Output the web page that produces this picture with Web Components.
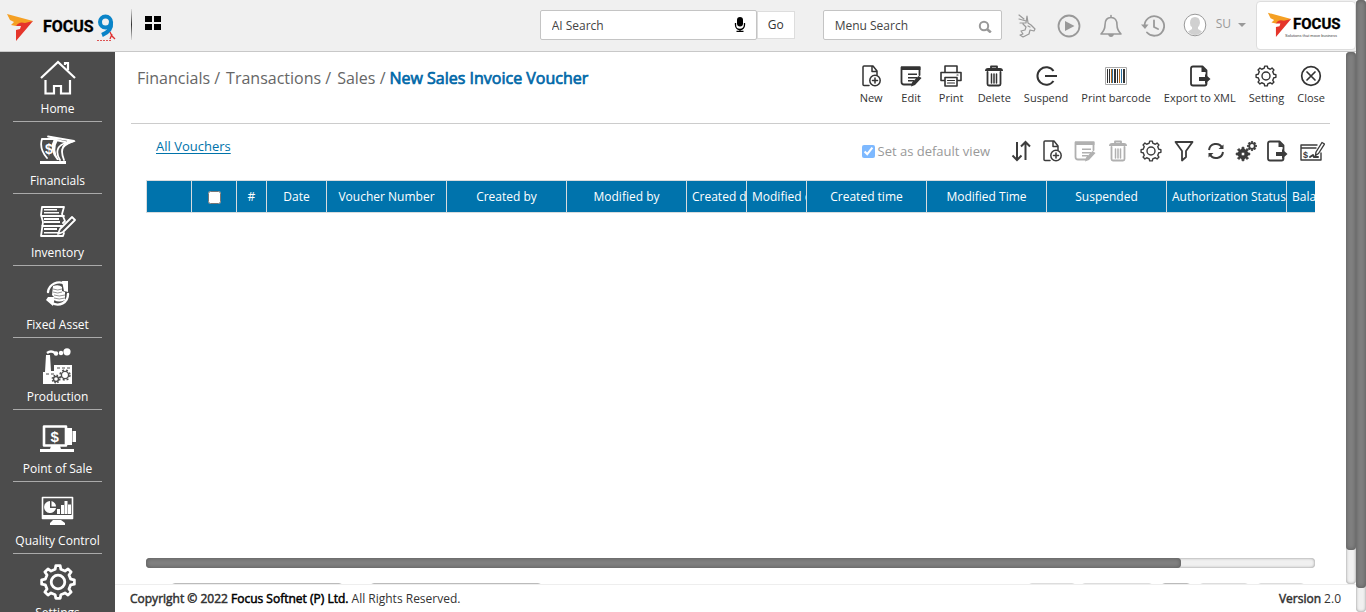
<!DOCTYPE html>
<html lang="en">
<head>
<meta charset="utf-8">
<title>New Sales Invoice Voucher</title>
<style>
html, body { height: 100%; margin: 0; }
body { font: 13px/20px "Open Sans", "Noto Sans", sans-serif; color: #333; background: #fff; overflow: hidden; }
</style>
</head>
<body>
<focus-app></focus-app>

<template id="t-app">
<style>
:host { display: flex; height: 100vh; }
.shell { flex: 1; min-width: 0; display: flex; flex-direction: column; }
.body { flex: 1; min-height: 0; display: flex; }
.work { flex: 1; min-width: 0; display: flex; flex-direction: column; }
.pane { flex: 1; min-height: 0; display: flex; }
voucher-page { flex: 1; min-width: 0; }
footer { display: flex; justify-content: space-between; padding: 4px 15px 3px; border-top: 1px solid #eee; font-size: 12px; line-height: 20px; color: #333; }
b { font-weight: 400; -webkit-text-stroke: .5px currentColor; }
.co { color: #000; }
</style>
<div class="shell">
  <app-header></app-header>
  <div class="body">
    <side-nav>
      <nav-item icon="home">Home</nav-item>
      <nav-item icon="financials">Financials</nav-item>
      <nav-item icon="inventory">Inventory</nav-item>
      <nav-item icon="asset">Fixed Asset</nav-item>
      <nav-item icon="production">Production</nav-item>
      <nav-item icon="pos">Point of Sale</nav-item>
      <nav-item icon="quality">Quality Control</nav-item>
      <nav-item icon="biggear">Settings</nav-item>
    </side-nav>
    <div class="work">
      <div class="pane">
        <voucher-page></voucher-page>
        <scroll-bar style="--thumb: 93.6%"></scroll-bar>
      </div>
      <footer>
        <span><b>Copyright © 2022 <span class="co">Focus Softnet (P) Ltd.</span></b> All Rights Reserved.</span>
        <span><b>Version</b> 2.0</span>
      </footer>
    </div>
  </div>
</div>
<scroll-bar style="--thumb: 96%"></scroll-bar>
</template>

<template id="t-header">
<style>
:host { display: flex; align-items: flex-start; height: 51px; background: #f0f0f0; border-bottom: 1px solid #c8c8c8; }
.logo { margin: 10px 0 0 6px; }
.rule { width: 1px; height: 31px; margin: 9px 12px 0 14px; background: linear-gradient(#ddd, #333 50%, #ddd); }
button { font: inherit; color: inherit; border: 0; background: none; padding: 0; margin: 0; cursor: pointer; display: block; }
.apps { margin-top: 14px; }
.search { display: flex; align-items: center; box-sizing: border-box; height: 30px; margin-top: 10px; background: #fff; border: 1px solid #c4c4c4; border-radius: 2px; padding: 0 8px 0 11px; }
.ai { width: 217px; margin-left: auto; }
.menu { width: 179px; margin-left: 28px; }
input { flex: 1; min-width: 0; border: 0; outline: 0; padding: 2px 0 0; background: none; font: inherit; font-size: 12px; color: #444; }
input::placeholder { color: #444; opacity: 1; }
.go { box-sizing: border-box; width: 38px; height: 28px; margin-top: 11px; background: #fff; border: 1px solid #ddd; font-size: 12px; color: #333; }
.icons { display: flex; gap: 18px; margin: 14px 0 0 13px; color: #999; }
.user { display: flex; align-items: center; margin: 13px 0 0 18px; color: #999; font-size: 12px; }
.user span { margin: 0 6px 2px 9px; }
.brand { box-sizing: border-box; width: 100px; height: 49px; margin: 1px 0 0 9px; padding: 7px 0 0 10px; background: #fff; border: 1px solid #ddd; border-radius: 4px; }
</style>
<focus-logo class="logo" kind="nine"></focus-logo>
<div class="rule"></div>
<button class="apps" aria-label="Apps"><fs-icon name="apps" size="18"></fs-icon></button>
<label class="search ai"><input type="text" placeholder="AI Search" aria-label="AI Search"><fs-icon name="mic" size="16"></fs-icon></label>
<button class="go">Go</button>
<label class="search menu"><input type="text" placeholder="Menu Search" aria-label="Menu Search"><fs-icon name="search" size="16" style="color:#999"></fs-icon></label>
<div class="icons">
  <button aria-label="Guide"><fs-icon name="guide" size="24"></fs-icon></button>
  <button aria-label="Play"><fs-icon name="play" size="24"></fs-icon></button>
  <button aria-label="Alerts"><fs-icon name="bell" size="24"></fs-icon></button>
  <button aria-label="History"><fs-icon name="history" size="24"></fs-icon></button>
</div>
<button class="user" aria-label="User menu"><fs-icon name="avatar" size="24"></fs-icon><span>SU</span><fs-icon name="caret" size="10"></fs-icon></button>
<div class="brand"><focus-logo></focus-logo></div>
</template>

<template id="t-page">
<style>
:host { display: flex; flex-direction: column; box-sizing: border-box; padding: 0 16px; overflow: hidden; }
.top { display: flex; justify-content: space-between; align-items: flex-start; height: 71px; border-bottom: 1px solid #ccc; }
nav { display: flex; margin: 14px 0 0 6px; font-size: 16px; line-height: 24px; color: #666; white-space: nowrap; }
nav a { color: inherit; text-decoration: none; }
nav a + a { margin-left: 6px; }
nav b { margin-left: 4px; color: #0068a8; font-weight: 400; -webkit-text-stroke: .7px currentColor; }
.tools { display: flex; gap: 13px; margin: 13px 5px 0 0; }
.view { display: flex; align-items: center; height: 56px; padding: 0 3px 0 25px; }
.all { margin: 0 auto 12px 0; color: #0073aa; text-decoration: underline; text-underline-offset: 2px; }
.def { display: flex; align-items: center; gap: 3px; margin: 0 19px 2px 0; color: #999; }
.def input { width: 13px; height: 13px; margin: 0; opacity: .5; }
.acts { display: flex; gap: 7px; color: #3c3c3c; align-items: center; margin-bottom: 2px; }
.acts button { border: 0; background: none; padding: 0; color: inherit; width: 26px; display: flex; justify-content: center; }
.acts .narrow { width: 23px; }
.acts .wide { width: 30px; }
.acts [disabled] { color: #b0b0b0; }
voucher-grid { flex: 1; min-height: 0; margin: 0 15px; }
.hbar { margin: 0 15px; }
.pager { display: flex; margin: 15px 25px -29px 40px; gap: 5px; }
.pager select, .pager button { box-sizing: border-box; height: 30px; border: 1px solid #bbb; border-radius: 4px; background: #fff; }
.pager select { width: 172px; margin-right: 22px; }
.pager button { border-color: #ddd; width: 48px; }
.pager .first { margin-left: auto; }
.pager .prev { width: 72px; margin-right: 3px; }
.pager .cur { width: 30px; border-color: #bbb; margin-right: 3px; }
.pager .next { width: 50px; margin-right: 3px; }
</style>
<div class="top">
  <nav><a href="#">Financials /</a> <a href="#">Transactions /</a> <a href="#">Sales /</a><b>New Sales Invoice Voucher</b></nav>
  <div class="tools">
    <tool-button icon="new">New</tool-button>
    <tool-button icon="edit">Edit</tool-button>
    <tool-button icon="print">Print</tool-button>
    <tool-button icon="trash">Delete</tool-button>
    <tool-button icon="suspend">Suspend</tool-button>
    <tool-button icon="barcode">Print barcode</tool-button>
    <tool-button icon="export">Export to XML</tool-button>
    <tool-button icon="gear">Setting</tool-button>
    <tool-button icon="close">Close</tool-button>
  </div>
</div>
<div class="view">
  <a class="all" href="#">All Vouchers</a>
  <label class="def"><input type="checkbox" checked>Set as default view</label>
  <div class="acts">
    <button class="narrow" aria-label="Sort"><fs-icon name="sort" size="22"></fs-icon></button>
    <button aria-label="New"><fs-icon name="new" size="22"></fs-icon></button>
    <button aria-label="Edit" disabled><fs-icon name="edit" size="22"></fs-icon></button>
    <button aria-label="Delete" disabled><fs-icon name="trash" size="22"></fs-icon></button>
    <button aria-label="Setting"><fs-icon name="gear" size="22"></fs-icon></button>
    <button aria-label="Filter"><fs-icon name="filter" size="22"></fs-icon></button>
    <button class="narrow" aria-label="Refresh"><fs-icon name="refresh" size="22"></fs-icon></button>
    <button class="narrow" aria-label="Customize"><fs-icon name="cogs" size="22"></fs-icon></button>
    <button aria-label="Export"><fs-icon name="export" size="22"></fs-icon></button>
    <button class="wide" aria-label="Cheque"><fs-icon name="cheque" size="26"></fs-icon></button>
  </div>
</div>
<voucher-grid></voucher-grid>
<scroll-bar class="hbar" horizontal style="--thumb: 88.5%"></scroll-bar>
<div class="pager">
  <select aria-label="View"></select><select aria-label="Rows per page"></select>
  <button class="first" aria-label="First"></button><button class="prev" aria-label="Previous"></button><button class="cur" aria-label="Current"></button><button class="next" aria-label="Next"></button><button aria-label="Last"></button>
</div>
</template>

<template id="t-grid">
<style>
:host { display: block; overflow: hidden; }
table { table-layout: fixed; border-collapse: collapse; width: 1260px; }
th { box-sizing: border-box; height: 32px; padding: 0 5px; background: #0073ac; border: 1px solid #d8dcde; color: #fff; font-size: 12px; font-weight: 400; white-space: nowrap; overflow: hidden; }
input { width: 13px; height: 13px; margin: 0; vertical-align: middle; }
</style>
<table>
  <colgroup><col style="width:45px"><col style="width:45px"><col style="width:30px"><col style="width:60px"><col style="width:120px"><col style="width:120px"><col style="width:120px"><col style="width:60px"><col style="width:60px"><col style="width:120px"><col style="width:120px"><col style="width:120px"><col style="width:120px"><col style="width:120px"></colgroup>
  <thead><tr>
    <th></th><th><input type="checkbox" aria-label="Select all"></th><th>#</th><th>Date</th><th>Voucher Number</th><th>Created by</th><th>Modified by</th><th>Created date</th><th>Modified date</th><th>Created time</th><th>Modified Time</th><th>Suspended</th><th>Authorization Status</th><th style="text-align:left">Balance</th>
  </tr></thead>
</table>
</template>

<script>
// Closed outline of a cog with rounded teeth.
function cog(cx, cy, outer, inner, teeth) {
  const pts = [], step = Math.PI * 2 / teeth;
  for (let i = 0; i < teeth; i++) {
    const a = i * step - Math.PI / 2;
    for (const [o, r] of [[-0.28, inner], [-0.17, outer], [0.17, outer], [0.28, inner]]) {
      pts.push((cx + r * Math.cos(a + o * step)).toFixed(2) + ' ' + (cy + r * Math.sin(a + o * step)).toFixed(2));
    }
  }
  return 'M' + pts.join('L') + 'Z';
}
const line = (w, body) => `<g fill="none" stroke="currentColor" stroke-width="${w}" stroke-linejoin="round" stroke-linecap="round">${body}</g>`;

const ICONS = {
  home: [36, line(2.2, '<path d="M1 18 18 2l17 16M25 5V3h3v7M5.500 20v13.500H14V26h7v7.500h9V20" stroke-linecap="butt" stroke-linejoin="miter"/>')],
  financials: [36, line(1.8, '<path d="M2 7C0 13 2 20 7 26M2 7h12M8 4.500 34 9C24 11 19 16 24 28M14 7.500l13 3C17 13 15 20 20 28"/>') + '<path fill="currentColor" d="M0 29h26v3H0zM27 8l9 1-7 3q-8 4-7 10-2-8 5-12zM14 7q-6 10 3 21h2q-7-10-1-20z"/><text x="5" y="22" font-size="14" font-weight="700" font-family="Liberation Sans, sans-serif" fill="currentColor">$</text>'],
  inventory: [36, line(1.8, '<path d="M2 3h22l-2 7 3 7-2 2M2 3l-1 8 2 7-2 14h22l1-3M2 12h22M2 22h20"/><path d="m20 25 12-12 3 3-12 12-5 2z"/>') + '<path fill="currentColor" d="M4 5h13v1.600H4zM4 8h15v1.500H4zM4 14h15v2H4zM4 17h16v2H4zM4 24h13v2H4zM4 28h15v1.500H4z"/>'],
  asset: [36, line(2.4, '<path d="M8 16C9 8 18 4 25 8M28 18c0 9-9 13-16 9"/>') + '<path fill="currentColor" d="m22 5 6 0v11l-4-1zM8 21l7 0-2 9-7-6zM13 10q6-2 9 1v4l3 1v8q-6 3-11 0v-3l-2-2z"/><g stroke="#4c4c4c" stroke-width=".6" fill="none"><path d="M13 13q5 2 9 0M13 16q5 2 9 0M14 19q5 2 11 0M14 22q5 2 11 0"/></g>'],
  production: [36, '<path fill="currentColor" d="M6 7h4l1 16h3v-6h18v19H3V24h2z"/><circle cx="27" cy="3.800" r="3.600" fill="currentColor"/><circle cx="21" cy="5" r="2.200" fill="currentColor"/><circle cx="16" cy="5.500" r="2.200" fill="currentColor"/><path d="M7 5q4-3 8 0" stroke="currentColor" stroke-width="2.400" fill="none"/><g fill="none" stroke="#4c4c4c" stroke-width="1.400"><path stroke-width="1" stroke-dasharray="3 2" d="M17 20h13M6 26h8"/><circle cx="25" cy="27" r="3.600"/><circle cx="25" cy="27" r="5" stroke-dasharray="2 2"/><circle cx="16" cy="31" r="2.500"/><circle cx="16" cy="31" r="3.800" stroke-dasharray="1.500 1.500"/></g>'],
  pos: [36, line(2.6, '<path d="M4 6.500h22v19H4z"/>') + '<path fill="currentColor" d="M11 26h9l1 3h13v3H0v-3h10zM27 8h5v17h-5zM32.500 11H36v11h-3.500z"/><path d="M34 29h2v3h-2z" fill="#4c4c4c"/><text x="10.500" y="21.500" font-size="15" font-weight="700" font-family="Liberation Sans, sans-serif" fill="currentColor">$</text>'],
  quality: [36, line(1.6, '<path d="M2.500 5.500h30v21h-30z"/>') + '<path fill="currentColor" d="M2 23h31v4H2zM13 28h8l4 3v2H10v-2zM17 17v5h3v-5zM21 19h2v3h-2zM21 13h3v9h-3zM24.500 9h3v13h-3zM28 12.500h3V22h-3zM10 9a6 6 0 1 0 6 7h-6zM11.500 9v5.500H16q0-4-4.500-5.500z"/>'],
  biggear: [36, line(2.8, `<path d="${cog(18, 18, 16.5, 13, 8)}"/><circle cx="18" cy="18" r="6.800"/>`)],
  apps: [18, '<path fill="#000" d="M1 2h7v6H1zM10 2h7v6h-7zM1 10h7v6H1zM10 10h7v6h-7z"/>'],
  mic: [16, '<rect x="5" y="0" width="6" height="9.500" rx="3" fill="#000"/><path d="M3.500 6v2a4.500 4.500 0 0 0 9 0V6M8 12v2M4.500 14.300h7" fill="none" stroke="#000" stroke-width="1.300"/>'],
  search: [16, '<circle cx="7" cy="9" r="4.200" fill="none" stroke="currentColor" stroke-width="2"/><path d="m10 12 3.800 3.500" stroke="currentColor" stroke-width="2.600"/>'],
  guide: [24, line(1.2, '<path d="m4 1 5 4M4 5l7 2M5 9l6 0 1-7 1 7 3 2 4 4-1 2-4-1-1 4-6 3-3-2 3-1-2-3 4-1 1-3-3-3M13 12l2 1"/>')],
  play: [24, '<circle cx="12" cy="12" r="10.500" fill="none" stroke="currentColor" stroke-width="1.800"/><path fill="currentColor" d="m8 7 9.500 5L8 17z"/>'],
  bell: [24, line(1.6, '<path d="M2 20h20c-3-3-4-5-4-9 0-5-2-7.500-6-7.500S6 6 6 11c0 4-1 6-4 9zM12 3V1.500"/>') + '<path fill="currentColor" d="M9 20h6q-.5 3-3 3t-3-3z"/>'],
  history: [24, line(1.8, '<path d="M3.500 12A9.800 9.800 0 1 1 6 18.500M13 6.500V13l4 2"/>') + '<path fill="currentColor" d="M0 10.500h7.500L4 15z"/>'],
  avatar: [24, '<circle cx="12" cy="12" r="10.800" fill="#fff" stroke="#999"/><path fill="#d0d0d0" d="M12 4q5 0 5 6-.5 3-2 4v2l4 2.500q-3 3.500-7 3.500t-7-3.500L9 16v-2q-2-1-2-4 0-6 5-6z"/>'],
  caret: [10, '<path fill="currentColor" d="M1 3h8L5 7z"/>'],
  new: [22, line(1.5, '<path d="M9 20.500H4q-1 0-1-1V2q0-1 1-1h9l4 5v4M12 1.500V6.500h4.500"/><circle cx="15" cy="15.500" r="5.200"/><path d="M15 13v5M12.500 15.500h5"/>')],
  edit: [22, line(1.8, '<path d="M12 19.500H4q-2.500 0-2.500-2.500V2.500h18V10"/>') + '<path fill="currentColor" d="M1 1.500h19.500V5H1zM8 8.500h9V10H8zM8 12h9v1.500H8zM8 15h6v1.500H8zM18.500 11l3 2-6.500 7-4 1.500 1-4z"/>'],
  print: [22, line(1.6, '<path d="M5 7.500V1h12v6.500M5 15.500H1v-8h20v8h-4M5 12.500h12V21H5z"/><path stroke-width="1.200" d="M7.500 15.500h7M7.500 18h7M17 10h1"/>')],
  trash: [22, line(1.8, '<path d="M4.500 7v12q0 1.500 1.500 1.500h10q1.500 0 1.500-1.500V7M8 4V1.500h6V4"/><path stroke-width="1.500" d="M8.500 9v9M11 9v9M13.500 9v9"/>') + '<path fill="currentColor" d="M2 6q0-3 3-3h12q3 0 3 3z"/>'],
  suspend: [22, line(2, '<path d="M18.500 6A8.800 8.800 0 1 0 18.500 16M10 11h12" stroke-linecap="butt"/>')],
  barcode: [22, '<path fill="#fff" stroke="#aaa" d="M.5 2.500h21v17H.5z"/><path fill="#333" d="M2 4h1v14H2zM4 4h1v14H4zM9 4h2v14H9zM12 4h1v14h-1zM18 4h2v14h-2z"/><path fill="#b06820" d="M6 4h1v14H6zM14 4h1v14h-1z"/><path fill="#2b70a0" d="M7 4h1v14H7zM16 4h1v14h-1z"/>'],
  export: [22, line(1.8, '<path d="M17.500 17v1.500q0 2-2 2H4q-2 0-2-2v-15q0-2 2-2h9.500l4 4V11"/>') + '<path fill="currentColor" d="M12.500 1v6H18zM10 12h6V9l5.500 5-5.500 5v-3h-6z"/>'],
  gear: [22, line(1.4, `<path d="${cog(11, 11, 10, 8, 8)}"/><circle cx="11" cy="11" r="4"/>`)],
  close: [22, line(1.7, '<circle cx="11" cy="11" r="9.300"/><path d="m7 7 8 8M15 7l-8 8"/>')],
  sort: [22, line(2, '<path d="M7 2v18M2.500 15.500 7 20l4.500-4.500M15.500 20V2M11 6.500 15.500 2 20 6.500" stroke-linecap="butt" stroke-linejoin="miter"/>')],
  filter: [22, line(1.8, '<path d="M2.500 2h17L13 11v6l-4 3.500V11z"/>')],
  refresh: [22, line(2, '<path d="M4 10C5 3 14 2 17 7.500M18 12C17 19 8 20 5 14.500" stroke-linecap="butt"/>') + '<path fill="currentColor" d="M18.500 4.500V9h-5zM3.500 17.500V13h5z"/>'],
  cogs: [22, `<g fill="none" stroke="currentColor"><path fill="currentColor" stroke-width="1" d="${cog(8, 14, 6.8, 4.8, 8)}"/><circle cx="8" cy="14" r="2" fill="#fff"/><path fill="currentColor" stroke-width="1" d="${cog(17, 6, 4.6, 3.4, 8)}"/><circle cx="17" cy="6" r="1.900" fill="#fff" stroke="none"/></g>`],
  cheque: [26, line(1.4, '<path d="M18 7H2v15h20v-7M2 10h15"/><path d="m17 14 6-9.500 2.500 1.500-6 9.500-3 2z"/><path stroke-width="2" d="m11 19 3-2 1 2h4"/>') + '<text x="4" y="20" font-size="9" font-weight="700" font-family="Liberation Sans, sans-serif" fill="currentColor">$</text>']
};

class FsIcon extends HTMLElement {
  connectedCallback() {
    const [box, body] = ICONS[this.getAttribute('name')];
    const size = this.getAttribute('size') || box;
    this.attachShadow({ mode: 'open' }).innerHTML =
      `<style>:host{display:block;flex:none}svg{display:block}</style><svg width="${size}" height="${size}" viewBox="0 0 ${box} ${box}" aria-hidden="true">${body}</svg>`;
  }
}

class FocusLogo extends HTMLElement {
  connectedCallback() {
    const nine = this.getAttribute('kind') === 'nine';
    const mark = nine ? [28, 32] : [25, 29];
    this.attachShadow({ mode: 'open' }).innerHTML = `
<style>
:host { display: flex; }
svg { display: block; flex: none; }
.word { font: 700 ${nine ? 16 : 15}px/18px Roboto, "Open Sans", sans-serif; color: #000; -webkit-text-stroke: .3px #000; }
.tag { font: 4px/5px "Liberation Sans", sans-serif; color: #444; white-space: nowrap; margin: 0 0 0 -8px; }
.names { margin: ${nine ? '8px 0 0 9px' : '6px 0 0 1px'}; }
.n { margin: 4px 0 0 3px; }
</style>
<svg width="${mark[0]}" height="${mark[1]}" viewBox="0 0 28 32" aria-hidden="true">
  <path fill="#f5a023" d="M1 4 27 11l-8 4-3-2-6 3-5-1 3-3-4-2z"/>
  <path fill="#e5352b" d="M27 11 10 31l0-11 4-1 1-3-5 0q3-5 9-3z"/>
</svg>
<div class="names"><div class="word">FOCUS</div>${nine ? '' : '<div class="tag">Solutions that move business</div>'}</div>
${nine ? `<svg class="n" width="20" height="30" viewBox="0 0 20 30" aria-hidden="true">
  <circle cx="8.500" cy="8" r="5.500" fill="none" stroke="#0a84c8" stroke-width="4"/>
  <path d="M14 8Q15 17 5 21" fill="none" stroke="#0a84c8" stroke-width="4.200"/>
  <path d="m13 18 2 4 3 3M15 20l-2 5" stroke="#e03030" stroke-width="1.300" fill="none"/>
  <path d="M0 26.500H14" stroke="#d55" stroke-width="1.200" stroke-dasharray="2 1"/></svg>` : ''}`;
  }
}

class ScrollBar extends HTMLElement {
  connectedCallback() {
    const h = this.hasAttribute('horizontal');
    this.attachShadow({ mode: 'open' }).innerHTML = `
<style>
:host { display: block; flex: none; ${h ? 'height' : 'width'}: 10px; background: #f0f0f0; border-radius: 4px; box-shadow: inset 0 0 3px #888; }
div { ${h ? 'width' : 'height'}: var(--thumb); ${h ? 'height' : 'width'}: 10px; background: #808080; border-radius: 4px; box-shadow: inset 0 0 4px #555; }
</style><div></div>`;
  }
}

class SideNav extends HTMLElement {
  connectedCallback() {
    this.attachShadow({ mode: 'open' }).innerHTML = `
<style>
:host { display: block; flex: none; width: 115px; background: #4c4c4c; color: #fff; overflow: hidden; }
::slotted(:first-child) { margin-top: -2px; }
</style><nav><slot></slot></nav>`;
  }
}

class NavItem extends HTMLElement {
  connectedCallback() {
    this.attachShadow({ mode: 'open' }).innerHTML = `
<style>
:host { display: block; }
a { display: flex; flex-direction: column; align-items: center; gap: 3px; margin: 0 13px; padding: 10px 0 2px; border-bottom: 1px solid #aaa; color: inherit; text-decoration: none; font-size: 12px; line-height: 20px; white-space: nowrap; }
</style><a href="#"><fs-icon name="${this.getAttribute('icon')}"></fs-icon><span><slot></slot></span></a>`;
  }
}

class ToolButton extends HTMLElement {
  connectedCallback() {
    this.attachShadow({ mode: 'open' }).innerHTML = `
<style>
:host { display: block; }
button { display: flex; flex-direction: column; align-items: center; gap: 2px; min-width: 27px; border: 0; background: none; padding: 0; color: #333; font: inherit; font-size: 11px; line-height: 18px; white-space: nowrap; cursor: pointer; }
</style><button><fs-icon name="${this.getAttribute('icon')}"></fs-icon><span><slot></slot></span></button>`;
  }
}

const fromTemplate = id => class extends HTMLElement {
  connectedCallback() {
    this.attachShadow({ mode: 'open' }).append(document.getElementById(id).content.cloneNode(true));
  }
};

customElements.define('fs-icon', FsIcon);
customElements.define('focus-logo', FocusLogo);
customElements.define('scroll-bar', ScrollBar);
customElements.define('side-nav', SideNav);
customElements.define('nav-item', NavItem);
customElements.define('tool-button', ToolButton);
customElements.define('voucher-grid', fromTemplate('t-grid'));
customElements.define('voucher-page', fromTemplate('t-page'));
customElements.define('app-header', fromTemplate('t-header'));
customElements.define('focus-app', fromTemplate('t-app'));
</script>
</body>
</html>
